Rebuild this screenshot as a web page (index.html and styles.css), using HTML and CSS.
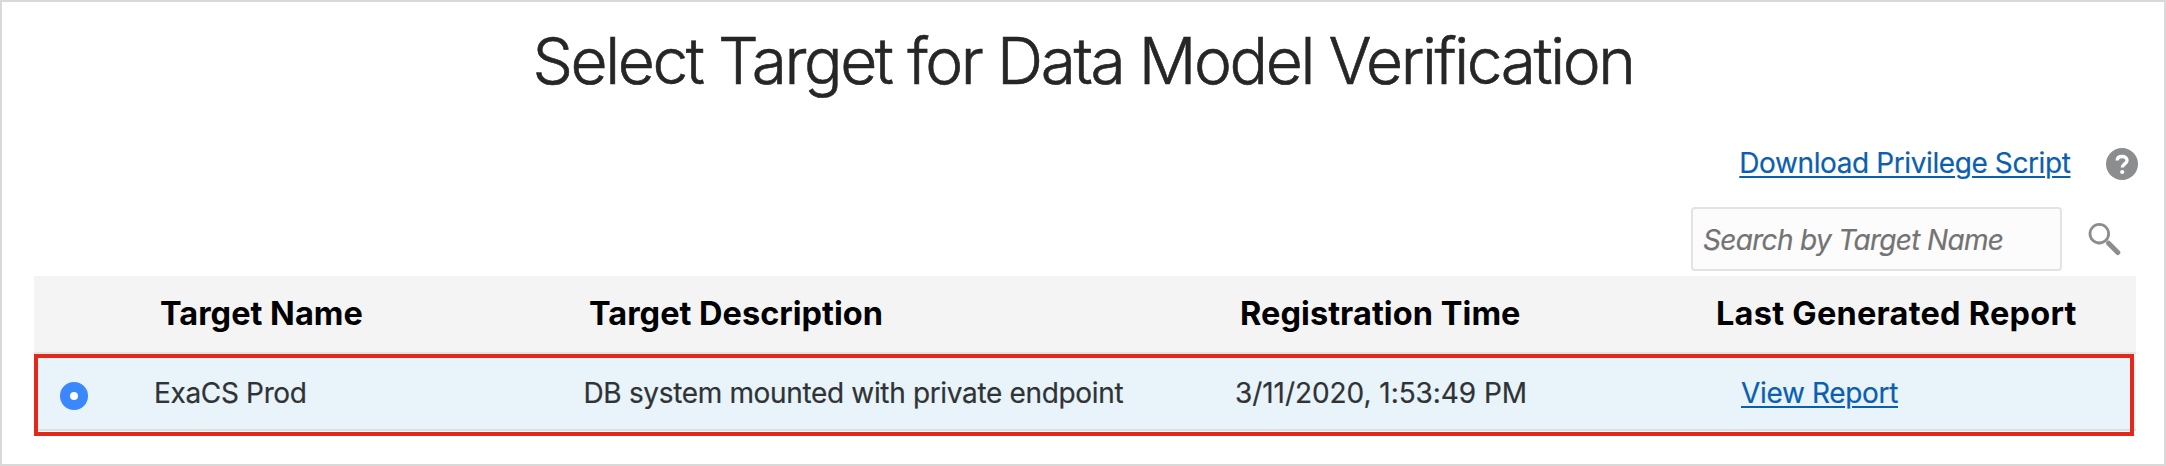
FILE: index.html
```
<!DOCTYPE html>
<html lang="en">
<head>
<meta charset="utf-8">
<title>Select Target for Data Model Verification</title>
<link rel="stylesheet" href="styles.css">
</head>
<body>
<main class="panel">
  <h1 class="title">Select Target for Data Model Verification</h1>
  <div class="actions">
    <a class="link download" href="#">Download Privilege Script</a>
    <svg class="help" viewBox="0 0 32 32" aria-label="Help"><circle cx="16" cy="16" r="16"/><path d="M11.2 12.6C11.2 10 13.2 8.5 16.1 8.5s4.9 1.5 4.9 3.9c0 3.4-4.7 3.6-4.7 7.2"/><circle class="dot" cx="16.2" cy="24" r="2.1"/></svg>
  </div>
  <div class="search">
    <input class="field" type="text" placeholder="Search by Target Name">
    <svg class="glass" viewBox="0 0 34 34"><circle cx="11.3" cy="10.7" r="9.3"/><path d="M20.6 20.2L29.8 29.5"/></svg>
  </div>
  <section class="table">
    <div class="row head">
      <span>Target Name</span><span>Target Description</span><span class="time-head">Registration Time</span><span class="report-head">Last Generated Report</span>
    </div>
    <div class="row body">
      <span class="radio"></span><span>ExaCS Prod</span><span>DB system mounted with private endpoint</span><span class="time">3/11/2020, 1:53:49 PM</span><span><a class="link" href="#">View Report</a></span>
      <div class="highlight"></div>
    </div>
  </section>
</main>
</body>
</html>
```
FILE: styles.css
```
* { box-sizing: border-box; }
body { margin: 0; background: #fff; font-family: Inter, "Liberation Sans", sans-serif; }
.panel { width: 2166px; height: 466px; border: 2px solid #d9d9d9; padding: 0 28px 0 32px; overflow: hidden; }
.title { margin: 0; padding: 19px 4px 0 0; height: 146px; line-height: 80px; font-size: 64px; font-weight: 300; letter-spacing: -2.4px; -webkit-text-stroke: .6px #262626; color: #262626; text-align: center; white-space: nowrap; }
.actions { display: flex; justify-content: flex-end; align-items: center; gap: 35.5px; height: 32px; margin-right: -2px; }
.link { color: #0a5fb0; font-size: 28px; text-decoration: underline; text-decoration-thickness: 2px; text-underline-offset: 3px; -webkit-text-stroke: .2px #0a5fb0; }
.download { letter-spacing: -.4px; padding-bottom: 2px; }
.help { width: 32px; height: 32px; fill: #8b8d8f; }
.help path { fill: none; stroke: #fff; stroke-width: 3.4; }
.help .dot { fill: #fff; }
.search { display: flex; justify-content: flex-end; gap: 26px; margin-top: 27px; height: 64px; padding-right: 14px; }
.field { width: 371px; height: 64px; border: 2px solid #e3e3e3; border-radius: 4px; background: #fcfcfc; padding: 2px 10px 0; font: italic 28px Inter, "Liberation Sans", sans-serif; letter-spacing: -.68px; }
.field::placeholder { color: #737373; opacity: 1; -webkit-text-stroke: .2px #737373; }
.glass { width: 34px; height: 34px; margin-top: 16px; fill: none; stroke: #8b8d8f; stroke-width: 2.8; }
.glass path { stroke-width: 5; stroke-linecap: round; }
.table { width: 2102px; margin-top: 5px; }
.row { display: grid; align-items: center; white-space: nowrap; }
.head { grid-template-columns: 429px 651px 476px 420px; padding: 0 0 2px 126px; height: 78px; background: #f4f4f4; border-bottom: 2px solid #e4e4e4; font-size: 32.5px; font-weight: 680; color: #000; }
.time-head { letter-spacing: .06px; }
.report-head { letter-spacing: .24px; }
.body { grid-template-columns: 120px 429.5px 651.5px 506px 395px; padding-top: 3px; position: relative; height: 77px; background: #e8f3fa; border-bottom: 2px solid #dbe0e2; font-size: 28px; letter-spacing: -.34px; color: #303335; -webkit-text-stroke: .2px #303335; }
.radio { width: 28px; height: 28px; margin: 5px 0 0 26px; border-radius: 50%; border: 10px solid #3a87ff; background: #fff; }
.time { letter-spacing: -.06px; }
.highlight { position: absolute; left: 0; top: 0; width: 2100px; height: 82px; border: 4px solid #e22819; pointer-events: none; }
```
